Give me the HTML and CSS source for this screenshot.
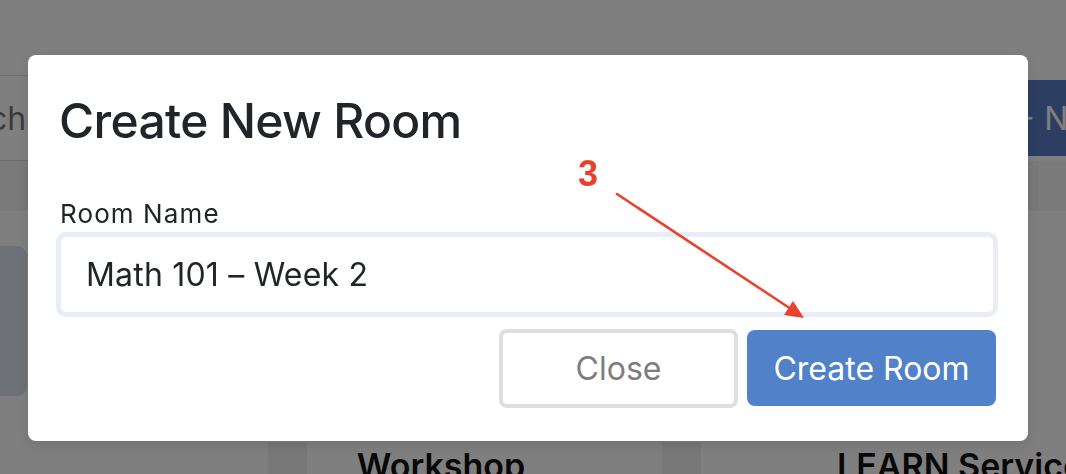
FILE: index.html
```html
<!DOCTYPE html>
<html lang="en">
<head>
<meta charset="utf-8">
<title>Create New Room</title>
<link rel="stylesheet" href="styles.css">
</head>
<body>
<div class="page">
  <div class="toolbar">
    <div class="search">Search</div>
    <div class="new-btn">+ New Room</div>
  </div>
  <div class="band"><span class="band-line"></span></div>
  <div class="content">
    <div class="side-card"></div>
  </div>
  <div class="cards">
    <div class="card-gap"></div>
    <div class="card"><h3 class="card-title">Workshop</h3></div>
    <div class="card-gap"></div>
    <div class="card card-wide"><h3 class="card-title">LEARN Services</h3></div>
  </div>
</div>

<div class="overlay">
  <div class="modal">
    <h2 class="modal-title">Create New Room</h2>
    <label class="field-label" for="room">Room Name</label>
    <input id="room" class="field-input" type="text" value="Math 101 – Week 2">
    <div class="actions">
      <button class="btn btn-close">Close</button>
      <button class="btn btn-create">Create Room</button>
    </div>
    <span class="step">3</span>
  </div>
  <svg class="arrow" width="1066" height="474" viewBox="0 0 1066 474">
    <line x1="617" y1="194" x2="791" y2="309" stroke="#e8422b" stroke-width="2.6" stroke-linecap="round"/>
    <polygon points="804,318 784,315 793,301" fill="#e8422b"/>
  </svg>
</div>
</body>
</html>
```

FILE: styles.css
```css
* { box-sizing: border-box; }

html, body {
  margin: 0;
  padding: 0;
  width: 1066px;
  height: 474px;
  overflow: hidden;
  background: #ffffff;
  font-family: Inter, "Noto Sans", sans-serif;
  color: #212529;
}

.page {
  width: 1066px;
  height: 474px;
  overflow: hidden;
}

.toolbar {
  display: flex;
  justify-content: space-between;
  align-items: center;
  padding-top: 75px;
}

.search {
  width: 150px;
  height: 86px;
  margin-left: -92px;
  border-top: 1px solid #d8d8d8;
  border-bottom: 1px solid #d8d8d8;
  border-right: 1px solid #d8d8d8;
  display: flex;
  align-items: center;
  padding-left: 12px;
  font-size: 32px;
  color: #777777;
  white-space: nowrap;
}

.new-btn {
  width: 200px;
  height: 76px;
  margin-right: -148px;
  background: #587ec6;
  border-radius: 8px;
  display: flex;
  align-items: center;
  font-size: 32px;
  color: #ffffff;
  white-space: nowrap;
}

.band {
  height: 50px;
  background: #f4f4f4;
  display: flex;
  justify-content: flex-end;
}

.band-line {
  width: 1px;
  height: 100%;
  background: #ececec;
  margin-right: 28px;
}

.content {
  height: 231px;
  padding-top: 35px;
}

.side-card {
  width: 60px;
  height: 150px;
  margin-left: -33px;
  background: #dce3ee;
  border-radius: 10px;
}

.cards {
  display: flex;
  height: 60px;
}

.card-gap {
  width: 40px;
  background: #f0f0f0;
}

.cards .card-gap:first-child {
  margin-left: 268px;
}

.card {
  width: 365px;
  padding-left: 50px;
  padding-top: 3px;
}

.card-wide {
  padding-left: 136px;
}

.card-title {
  margin: 0;
  font-size: 34px;
  font-weight: 600;
  color: #111111;
  white-space: nowrap;
}

/* overlay + modal */
.overlay {
  position: fixed;
  inset: 0;
  background: rgba(0, 0, 0, 0.5);
  display: flex;
  justify-content: flex-start;
  align-items: flex-start;
  padding: 55px 0 0 28px;
}

.modal {
  position: relative;
  width: 1000px;
  flex: none;
  background: #ffffff;
  border-radius: 8px;
  padding: 37px 32px 33px 30px;
  box-shadow: 0 4px 14px rgba(0, 0, 0, 0.12);
  display: flex;
  flex-direction: column;
}

.modal-title {
  margin: 0 0 46px 0;
  font-size: 48px;
  font-weight: 500;
  line-height: 1.2;
  color: #212529;
  padding-left: 1px;
  letter-spacing: -0.7px;
}

.field-label {
  font-size: 26px;
  line-height: 36px;
  letter-spacing: 1.1px;
  color: #212529;
  padding-left: 2px;
}

.field-input {
  margin: 0 -2px 0 -2px;
  height: 85px;
  border: 5px solid #e8eef7;
  border-radius: 10px;
  padding: 0 22px 0 25px;
  font-family: Inter, "Noto Sans", sans-serif;
  font-size: 32px;
  letter-spacing: 0.2px;
  color: #212529;
  background: #ffffff;
  outline: none;
}

.actions {
  display: flex;
  justify-content: flex-end;
  align-items: center;
  gap: 9px;
  margin-top: 12px;
}

.btn {
  font-family: Inter, "Noto Sans", sans-serif;
  font-size: 32px;
  border-radius: 8px;
  cursor: pointer;
}

.btn-close {
  width: 239px;
  height: 79px;
  background: #ffffff;
  border: 4px solid #dedede;
  color: #7d7d7d;
}

.btn-create {
  width: 249px;
  height: 76px;
  background: #5181c8;
  border: none;
  color: #ffffff;
}

.step {
  position: absolute;
  left: 550px;
  top: 101px;
  font-family: "Liberation Sans", Arial, sans-serif;
  font-weight: 700;
  font-size: 36px;
  line-height: 1;
  color: #e8422b;
}

.arrow {
  position: absolute;
  left: 0;
  top: 0;
  pointer-events: none;
}
```
